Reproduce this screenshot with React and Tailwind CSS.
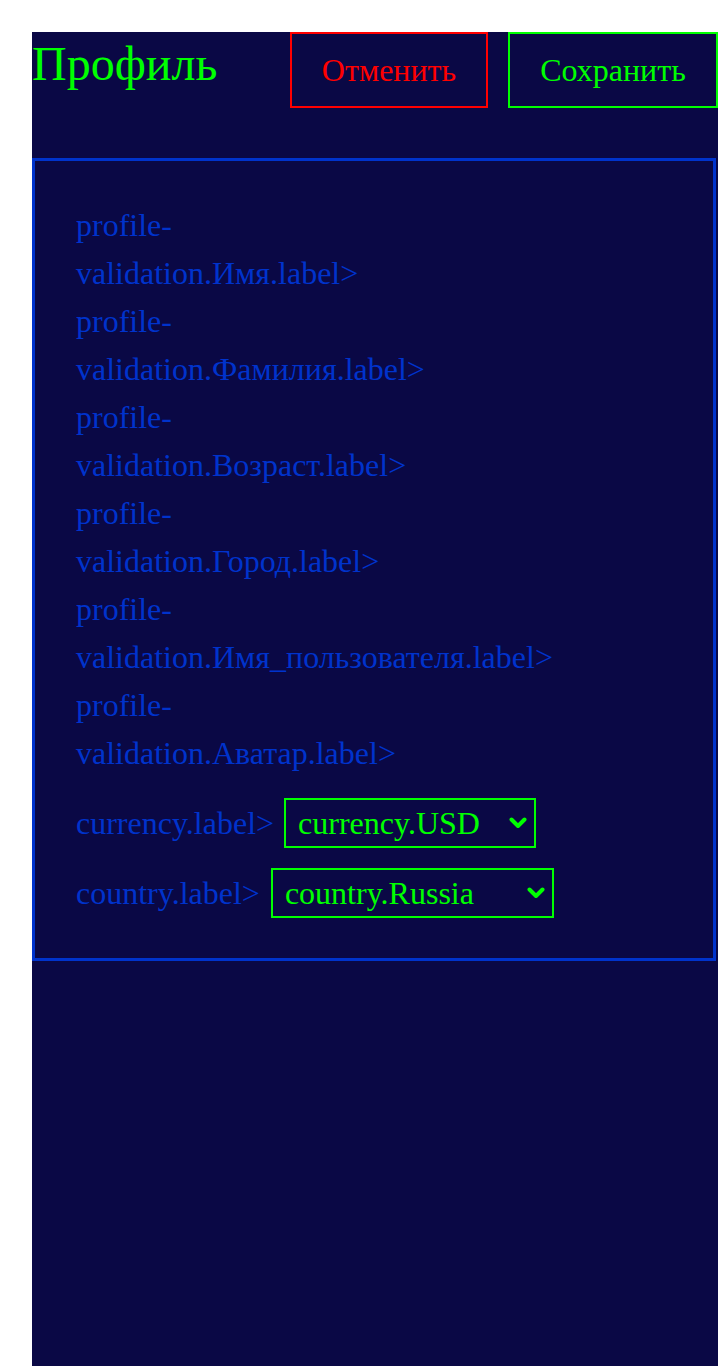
import React from "react";

const labels = ["Имя", "Фамилия", "Возраст", "Город", "Имя_пользователя", "Аватар"];

const Chevron = () => (
  <svg width="18" height="12" viewBox="0 0 18 12" fill="none">
    <polyline points="2.5,2.5 9,9 15.5,2.5" stroke="#00ff00" strokeWidth="4" strokeLinecap="round" strokeLinejoin="round" />
  </svg>
);

const FakeSelect = ({ value, width }) => (
  <div
    className={`flex h-[50px] items-center justify-between border-2 border-[#00ff00] pl-[12px] pr-[7px] text-[32px] text-[#00ff00] ${width}`}
  >
    <span>{value}</span>
    <Chevron />
  </div>
);

const App = () => {
  return (
    <div className="min-h-screen bg-white pl-8 pt-8" style={{ fontFamily: '"Liberation Serif", "Times New Roman", serif' }}>
      <div className="w-[686px] min-h-[1334px] bg-[#0a0845]">
        <div className="flex items-start justify-between">
          <h1 className="mt-2 text-[48px] leading-[48px] text-[#00ff00]">Профиль</h1>
          <div className="flex gap-5">
            <button className="flex h-[76px] w-[198px] items-center justify-center border-2 border-[#ff0000] text-[32px] leading-[48px] text-[#ff0000]">
              Отменить
            </button>
            <button className="flex h-[76px] w-[210px] items-center justify-center border-2 border-[#00ff00] text-[32px] leading-[48px] text-[#00ff00]">
              Сохранить
            </button>
          </div>
        </div>

        <div className="mt-[50px] w-[684px] border-[3px] border-[#0033cc] pb-10 pl-[41px] pt-10">
          <div className="text-[32px] leading-[48px] text-[#0033cc]">
            {labels.map((l) => (
              <div key={l}>
                <div>profile-</div>
                <div>validation.{l}.label&gt;</div>
              </div>
            ))}
          </div>
          <div className="mt-[21px] flex h-[50px] items-center gap-[10px]">
            <span className="text-[32px] leading-[48px] text-[#0033cc]">currency.label&gt;</span>
            <FakeSelect value="currency.USD" width="w-[252px]" />
          </div>
          <div className="mt-5 flex h-[50px] items-center gap-[11px]">
            <span className="text-[32px] leading-[48px] text-[#0033cc]">country.label&gt;</span>
            <FakeSelect value="country.Russia" width="w-[283px]" />
          </div>
        </div>
      </div>
    </div>
  );
};

export default App;
